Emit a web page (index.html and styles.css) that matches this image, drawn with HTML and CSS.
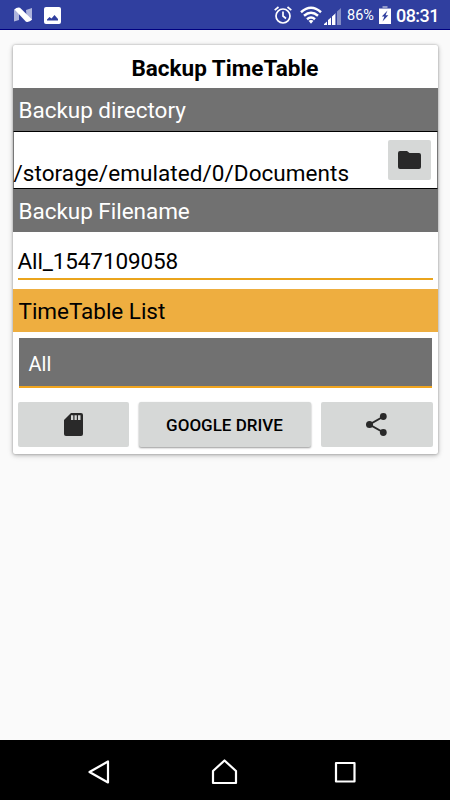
FILE: index.html
```html
<!DOCTYPE html>
<html lang="en">
<head>
<meta charset="utf-8">
<title>Backup TimeTable</title>
<link rel="stylesheet" href="styles.css">
</head>
<body>
<header class="status">
  <svg class="n-logo" width="18" height="16" viewBox="0 0 18 16"><path fill="#aeb4dc" d="M0 2.500 5 1v12L0 14.500zM12 3l6-2v12l-5 1.500z"/><path fill="#fff" d="M.5 2.500Q2.500 0 6 .7L18 12.500q-2.500 3-6 2.300z"/></svg>
  <svg class="photo" width="17" height="17" viewBox="0 0 17 17"><rect width="17" height="17" rx="2" fill="#fff"/><path fill="#303f9f" d="M3 13.500v-1l2.500-2.500 2 1.500L10.500 8l3.500 4v1.500z"/></svg>
  <span class="spacer"></span>
  <svg class="alarm" width="18" height="18" viewBox="0 0 18 18" fill="none" stroke="#fff" stroke-width="1.700"><circle cx="9" cy="10" r="7"/><path d="M9 5.500V10l3 2.500M.7 4.200 4.500 1M17.300 4.200 13.500 1"/></svg>
  <svg class="wifi" width="22" height="18" viewBox="0 0 22 18" fill="none" stroke="#fff" stroke-width="2.500"><path d="M1 6.200Q11-2.600 21 6.200M4 9.800q7-6 14 0M7 13.200q4-3.400 8 0"/><path d="m8.500 14.800 2.500 3 2.500-3q-2.500-1.600-5 0z" fill="#fff" stroke="none"/></svg>
  <svg class="signal" width="17" height="18" viewBox="0 0 17 18"><path fill="#fff" d="M0 18v-1l3-2.500V18zM4 18v-5l3-2.500V18z"/><path fill="#838cc5" d="M9 18V8.500l3-2.700V18zM13 18V4.500L17 1v17z"/><path fill="#fff" d="M8 18V9.500L11 7v11z"/></svg>
  <span class="percent">86%</span>
  <svg class="battery" width="12" height="18" viewBox="0 0 12 18"><path fill="#9299c9" d="M3.500 0h5v2H12v3H0V2h3.500z"/><path fill="#fff" d="M0 3h12v15H0z"/><path fill="#303f9f" d="M8.500 4.500 2.800 10.600h2.600L3.500 15.500 9.300 9.300H6.500z"/></svg>
  <span class="clock">08:31</span>
</header>
<main class="screen">
  <section class="card">
    <h1 class="title">Backup TimeTable</h1>
    <h2 class="band">Backup directory</h2>
    <div class="directory">
      <span class="path">/storage/emulated/0/Documents</span>
      <button class="button folder" aria-label="Choose folder"><svg width="23" height="18" viewBox="0 0 23 18"><path fill="#292929" d="M2 0h7l2.500 2H21q2 0 2 2v12q0 2-2 2H2q-2 0-2-2V2Q0 0 2 0z"/></svg></button>
    </div>
    <h2 class="band">Backup Filename</h2>
    <div class="filename"><div class="field">All_1547109058</div></div>
    <h2 class="band accent">TimeTable List</h2>
    <div class="select">All</div>
    <div class="actions">
      <button class="button" aria-label="Save to card"><svg width="19" height="23" viewBox="0 0 19 23"><path fill="#292929" d="M7 0h10q2 0 2 2v19q0 2-2 2H2q-2 0-2-2V7z"/><path fill="#d6d8d7" d="M7 2.300h2.300V7H7zM10.500 2.300h2.300V7h-2.300zM14 2.300h2.500V7H14z"/></svg></button>
      <button class="button raised">GOOGLE DRIVE</button>
      <button class="button" aria-label="Share"><svg width="21" height="23" viewBox="0 0 21 23"><path fill="none" stroke="#292929" stroke-width="2" d="M17.500 3.500 3.500 11.500l14 8"/><g fill="#292929"><circle cx="17.300" cy="3.500" r="3.400"/><circle cx="3.500" cy="11.500" r="3.500"/><circle cx="17.300" cy="19.500" r="3.400"/></g></svg></button>
    </div>
  </section>
</main>
<nav class="nav">
  <svg width="24" height="28" viewBox="0 0 24 28"><path d="M22 4.500v21L3.500 15z"/></svg>
  <svg width="28" height="28" viewBox="0 0 28 28"><path d="M14.500 3.500 26 14v12H3V14z"/></svg>
  <svg width="24" height="28" viewBox="0 0 24 28"><path d="M3 6h18.500v18.500H3z"/></svg>
</nav>
</body>
</html>
```

FILE: styles.css
```css
* { box-sizing: border-box; }
body {
  margin: 0;
  height: 800px;
  display: flex;
  flex-direction: column;
  overflow: hidden;
  background: #fafafa;
  color: #000;
  font-family: Roboto, "Liberation Sans", sans-serif;
}
svg { display: block; flex: none; }
.status {
  height: 30px;
  display: flex;
  align-items: flex-start;
  padding: 0 12px 0 14px;
  background: #303f9f;
  border-bottom: 1px solid #000080;
  color: #fff;
}
.n-logo { margin-top: 7px; }
.photo { margin: 7px 0 0 12px; }
.spacer { flex: 1; }
.alarm { margin: 6px 8px 0 0; }
.wifi { margin: 6px 2px 0 0; }
.signal { margin: 7px 6px 0 0; }
.percent { width: 27px; margin-right: 5px; font-size: 14.5px; line-height: 32px; white-space: nowrap; }
.battery { margin: 6px 5px 0 0; }
.clock { width: 42px; font-size: 18px; font-weight: 500; line-height: 32px; letter-spacing: -.55px; white-space: nowrap; }
.screen { flex: 1; padding: 15px 12.5px 0; }
.card {
  height: 409px;
  background: #fff;
  border-radius: 2px;
  box-shadow: 0 0 2px rgba(0,0,0,.25), 0 1px 4px rgba(0,0,0,.25), 0 2px 7px rgba(0,0,0,.08);
}
.title { height: 43px; margin: 0; font-size: 22.5px; line-height: 46px; font-weight: 700; text-align: center; }
.band {
  height: 43px;
  margin: 0;
  padding-left: 6px;
  background: #717171;
  color: #fff;
  font-size: 22.5px;
  line-height: 44px;
  letter-spacing: -.03px;
  font-weight: 400;
}
.directory {
  height: 58px;
  display: flex;
  justify-content: space-between;
  align-items: flex-end;
  padding: 0 6px 8px 0;
  border: 1px solid #000;
  border-left-color: #777;
  border-right-color: #777;
}
.path { margin-bottom: -8px; font-size: 22.5px; line-height: 30px; letter-spacing: .06px; }
.filename { height: 57px; padding: 0 5px; }
.field { height: 48px; border-bottom: 2px solid #eaa41c; font-size: 22.5px; line-height: 59px; letter-spacing: -.12px; }
.accent { background: #eeae40; color: #000; }
.select {
  height: 50px;
  margin: 6px 6px 14px;
  padding-left: 10px;
  background: #717171;
  border-bottom: 2px solid #f0a51f;
  color: #fff;
  font-size: 20px;
  line-height: 52px;
}
.actions { display: grid; grid-template-columns: 111px 172px 112px; gap: 10px; padding-left: 5px; }
.button {
  height: 45px;
  display: flex;
  align-items: center;
  justify-content: center;
  padding: 0;
  border: 0;
  border-radius: 2px;
  background: #d6d8d7;
  color: #000;
  font: 500 17px/45px Roboto, "Liberation Sans", sans-serif;
}
.folder { width: 43px; height: 40px; }
.raised { padding-top: 2px; box-shadow: 0 1px 2px rgba(0,0,0,.4); }
.nav {
  height: 60px;
  display: flex;
  gap: 38px;
  justify-content: space-between;
  padding: 17px 93px 0 86px;
  background: #000;
}
.nav path { fill: none; stroke: #fff; stroke-width: 2.2; stroke-linejoin: round; }
.nav svg:nth-child(2) { margin-left: 5px; }
```
